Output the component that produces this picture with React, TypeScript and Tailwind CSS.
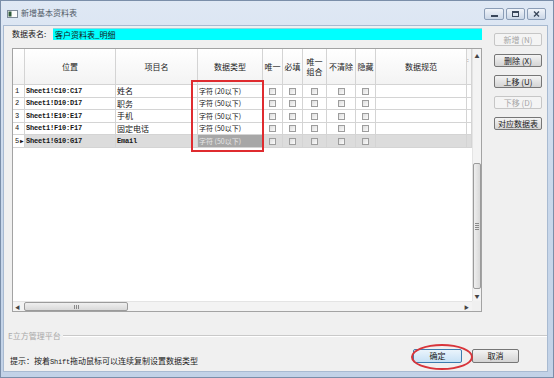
import React from "react";
import clsx from "clsx";

const COLS =
  "grid grid-cols-[12px_91px_82px_65px_20px_20px_24px_29px_20px_91px_5px]";
const CELL = "border-r border-b border-[#d4d4d4] flex items-center";
const MONO = "font-['Liberation_Mono',monospace] text-[7px] font-bold tracking-[-0.2px]";

const rows = [
  { n: "1", pos: "Sheet1!C10:C17", name: "姓名", type: "字符 (20以下)", h: "h-[13px]" },
  { n: "2", pos: "Sheet1!D10:D17", name: "职务", type: "字符 (50以下)", h: "h-[12px]" },
  { n: "3", pos: "Sheet1!E10:E17", name: "手机", type: "字符 (50以下)", h: "h-[13px]" },
  { n: "4", pos: "Sheet1!F10:F17", name: "固定电话", type: "字符 (50以下)", h: "h-[12px]" },
  { n: "5", pos: "Sheet1!G10:G17", name: "Email", type: "字符 (50以下)", h: "h-[13px]", sel: true, mono: true },
];

const CaptionBtn: React.FC<{ w: string; children: React.ReactNode }> = ({ w, children }) => (
  <div
    className={clsx(
      "h-[12px] rounded-[2px] border border-[#8b9db6] bg-gradient-to-b from-[#f1f4f9] to-[#cbd7e7] flex items-center justify-center",
      w
    )}
  >
    {children}
  </div>
);

const SideBtn: React.FC<{ label: string; disabled?: boolean }> = ({ label, disabled }) => (
  <div
    className={clsx(
      "h-[13px] rounded-[2px] border flex items-center justify-center text-[8px] leading-none",
      disabled
        ? "border-[#c6c6c6] bg-[#f4f4f4] text-[#a6a6a6]"
        : "border-[#767676] bg-gradient-to-b from-[#f4f4f4] to-[#d4d4d4] text-[#1b1b1b]"
    )}
  >
    {label}
  </div>
);

const Check: React.FC = () => (
  <div className="w-[7px] h-[7px] border border-[#9d9d9d] bg-gradient-to-br from-[#dedede] to-[#fbfbfb]" />
);

const Header: React.FC<{ children?: React.ReactNode }> = ({ children }) => (
  <div className={clsx(CELL, "justify-center text-center leading-[10px] text-[8px] text-[#222] bg-gradient-to-b from-white to-[#f3f3f3]")}>
    {children}
  </div>
);

export default function App() {
  return (
    <div className="relative w-[554px] h-[378px] overflow-hidden flex flex-col border border-[#7a8ea9] bg-gradient-to-b from-[#dfe8f4] via-[#c9d8eb] to-[#c2d2e7] font-['Noto_Sans_CJK_SC',sans-serif] text-[8px] text-[#151515]">
      {/* 标题栏 */}
      <div className="h-[24px] flex items-start pl-[6px] pr-[7px] pt-[7px]">
        <svg width="11" height="8" viewBox="0 0 11 8" className="mt-[2px]">
          <rect x="0.5" y="0.5" width="10" height="7" fill="#fbfbfb" stroke="#7d8a99" />
          <rect x="1.5" y="1.5" width="3" height="5" fill="#2f5a3a" />
        </svg>
        <span className="ml-[3px] mt-[1px] leading-none text-[#505a66]">新增基本资料表</span>
        <div className="flex-1" />
        <div className="flex gap-[2px]">
          <CaptionBtn w="w-[20px]">
            <div className="w-[7px] h-[2px] bg-[#3a475a] mt-[4px]" />
          </CaptionBtn>
          <CaptionBtn w="w-[19px]">
            <div className="w-[7px] h-[6px] border border-t-2 border-[#3a475a]" />
          </CaptionBtn>
          <CaptionBtn w="w-[19px]">
            <svg width="7" height="6" viewBox="0 0 7 6">
              <path d="M1 0.5 L6 5.5 M6 0.5 L1 5.5" stroke="#3a475a" strokeWidth="1.4" />
            </svg>
          </CaptionBtn>
        </div>
      </div>

      {/* 客户区 */}
      <div className="flex-1 ml-[2px] mr-[5px] mb-[5px] bg-[#f0f0f0] border border-[#a8bad1] flex flex-col">
        <div className="flex">
          <div className="w-[478px] pl-[8px] pt-[2px]">
            <div className="h-[12px] flex items-center">
              <span className="w-[41px] leading-none">数据表名:</span>
              <div className="flex-1 h-[12px] bg-[#00ffff] border-t border-[#8fd6e0] flex items-center pl-[2px] leading-none">
                客户资料表_明细
              </div>
            </div>

            {/* 表格 */}
            <div className="mt-[8px] w-[470px] h-[264px] border border-[#a3a3a3] bg-white flex flex-col">
              <div className="flex flex-1 min-h-0">
                <div className="flex-1 flex flex-col">
                  <div className={clsx(COLS, "h-[36px]")}>
                    <Header />
                    <Header>位置</Header>
                    <Header>项目名</Header>
                    <Header>数据类型</Header>
                    <Header>唯一</Header>
                    <Header>必填</Header>
                    <Header>
                      <div className="flex flex-col items-center">
                        <span>唯一</span>
                        <span>组合</span>
                      </div>
                    </Header>
                    <Header>不清除</Header>
                    <Header>隐藏</Header>
                    <Header>数据规范</Header>
                    <div className={clsx(CELL, "bg-[#f6f6f6] items-start pt-[6px] text-[6px] text-[#777]")}>:</div>
                  </div>
                  {rows.map((r) => (
                    <div key={r.n} className={clsx(COLS, r.h)}>
                      <div className={clsx(CELL, MONO, "pl-[2px] font-normal")}>
                        {r.n}
                        {r.sel && <span className="ml-[1px] text-[6px]">▶</span>}
                      </div>
                      <div className={clsx(CELL, MONO, "pl-[1px]", r.sel && "bg-[#dcdcdc]")}>{r.pos}</div>
                      <div
                        className={clsx(
                          CELL,
                          "pl-[1px] leading-none",
                          r.mono && MONO,
                          r.sel && "bg-[#dcdcdc]"
                        )}
                      >
                        {r.name}
                      </div>
                      <div
                        className={clsx(
                          CELL,
                          "pl-[1px] leading-none text-[7px]",
                          r.sel ? "bg-[#a7a7a7] text-[#e6e6e6]" : ""
                        )}
                      >
                        {r.type}
                      </div>
                      {[0, 1, 2, 3, 4].map((i) => (
                        <div key={i} className={clsx(CELL, "justify-center", r.sel && "bg-[#dcdcdc]")}>
                          <Check />
                        </div>
                      ))}
                      <div className={clsx(CELL, r.sel && "bg-[#dcdcdc]")} />
                      <div className={clsx(CELL, r.sel && "bg-[#dcdcdc]")} />
                    </div>
                  ))}
                  <div className="flex-1" />
                </div>

                {/* 竖向滚动条 */}
                <div className="w-[9px] flex flex-col bg-[#f3f3f3] border-l border-[#e4e4e4]">
                  <div className="h-[12px] flex items-center justify-center text-[5px] text-[#444] leading-none">▲</div>
                  <div className="h-[102px]" />
                  <div className="flex-1 rounded-[2px] border border-[#9b9b9b] bg-gradient-to-r from-[#efefef] to-[#d9d9d9] flex flex-col items-center justify-center gap-[1px]">
                    <div className="w-[4px] h-px bg-[#8a8a8a]" />
                    <div className="w-[4px] h-px bg-[#8a8a8a]" />
                    <div className="w-[4px] h-px bg-[#8a8a8a]" />
                    <div className="w-[4px] h-px bg-[#8a8a8a]" />
                  </div>
                  <div className="h-[12px] flex items-center justify-center text-[5px] text-[#444] leading-none">▼</div>
                </div>
              </div>

              {/* 横向滚动条 */}
              <div className="h-[10px] flex">
                <div className="flex-1 flex items-center bg-[#f3f3f3] border-t border-[#e4e4e4]">
                  <div className="w-[9px] flex justify-center text-[5px] text-[#444] leading-none">◀</div>
                  <div className="ml-[2px] w-[104px] h-[9px] rounded-[2px] border border-[#9b9b9b] bg-gradient-to-b from-[#efefef] to-[#d9d9d9] flex items-center justify-center gap-[1px]">
                    <div className="w-px h-[4px] bg-[#8a8a8a]" />
                    <div className="w-px h-[4px] bg-[#8a8a8a]" />
                    <div className="w-px h-[4px] bg-[#8a8a8a]" />
                  </div>
                  <div className="flex-1" />
                  <div className="w-[11px] flex justify-center text-[5px] text-[#444] leading-none">▶</div>
                </div>
                <div className="w-[9px] bg-[#f0f0f0]" />
              </div>
            </div>
          </div>

          {/* 右侧按钮 */}
          <div className="ml-[12px] w-[48px] pt-[7px] flex flex-col gap-[8px]">
            <SideBtn label="新增 (N)" disabled />
            <SideBtn label="删除 (X)" />
            <SideBtn label="上移 (U)" />
            <SideBtn label="下移 (D)" disabled />
            <SideBtn label="对应数据表" />
          </div>
        </div>

        {/* 分组线 */}
        <div className="mt-[19px] h-[10px] flex items-center pl-[4px]">
          <span className="leading-none text-[#a9a9a9]">E立方管理平台</span>
          <div className="flex-1 ml-[2px] border-t border-[#c9c9c9] border-b border-b-white" />
        </div>

        {/* 提示与按钮 */}
        <div className="mt-[8px] h-[18px] flex pl-[6px] pr-[28px]">
          <span className="self-end leading-[10px] text-[#1a1a1a]">
            提示：按着<span className={clsx(MONO, "font-normal")}>Shift</span>拖动鼠标可以连续复制设置数据类型
          </span>
          <div className="flex-1" />
          <div className="self-start flex gap-[10px]">
            <div className="w-[49px] h-[14px] rounded-[2px] border border-[#3d7bad] bg-gradient-to-b from-[#eaf4fc] to-[#c7e1f5] flex items-center justify-center leading-none">
              确定
            </div>
            <div className="w-[47px] h-[14px] rounded-[2px] border border-[#767676] bg-gradient-to-b from-[#f4f4f4] to-[#d4d4d4] flex items-center justify-center leading-none">
              取消
            </div>
          </div>
        </div>
      </div>

      {/* 红色标注 */}
      <div className="absolute left-[190px] top-[79px] w-[73px] h-[72px] border-2 border-[#df2b2f]" />
      <div className="absolute left-[410px] top-[343px] w-[62px] h-[26px] rounded-[50%] border-2 border-[#d8343a]" />
    </div>
  );
}
